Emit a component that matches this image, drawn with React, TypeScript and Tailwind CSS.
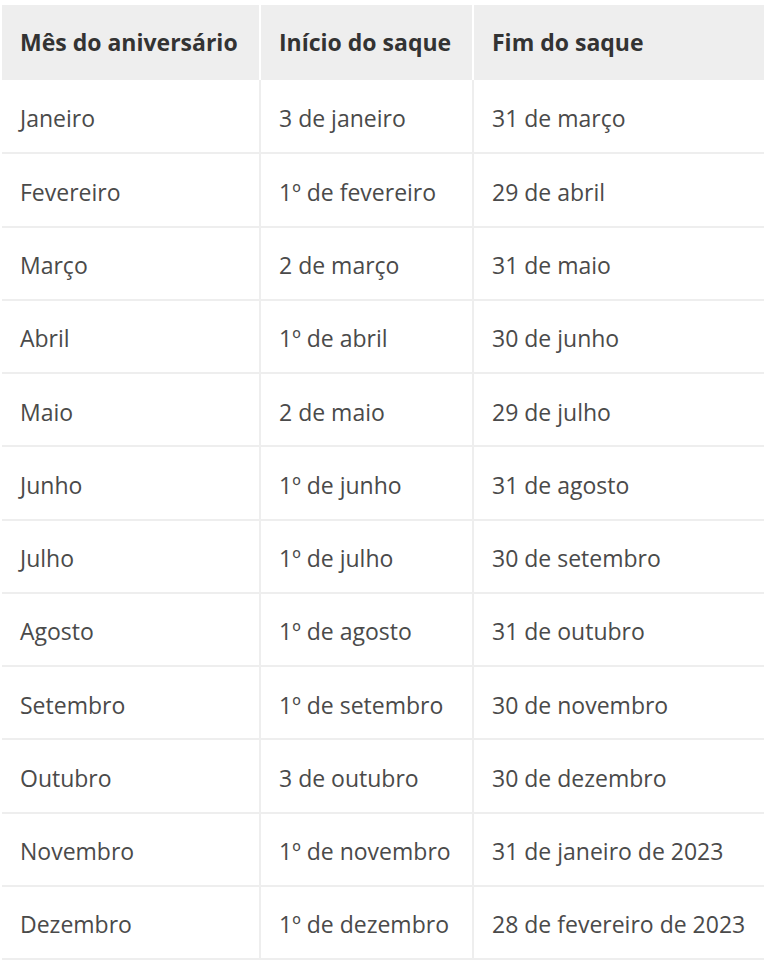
import React from 'react';

const rows: [string, string, string][] = [
  ['Janeiro', '3 de janeiro', '31 de março'],
  ['Fevereiro', '1º de fevereiro', '29 de abril'],
  ['Março', '2 de março', '31 de maio'],
  ['Abril', '1º de abril', '30 de junho'],
  ['Maio', '2 de maio', '29 de julho'],
  ['Junho', '1º de junho', '31 de agosto'],
  ['Julho', '1º de julho', '30 de setembro'],
  ['Agosto', '1º de agosto', '31 de outubro'],
  ['Setembro', '1º de setembro', '30 de novembro'],
  ['Outubro', '3 de outubro', '30 de dezembro'],
  ['Novembro', '1º de novembro', '31 de janeiro de 2023'],
  ['Dezembro', '1º de dezembro', '28 de fevereiro de 2023'],
];

export default function App() {
  return (
    <div className="min-h-screen bg-white pt-[5px] pl-[2px] font-['Open_Sans',sans-serif]">
      <table className="border-collapse table-fixed w-[762px] text-[23px] leading-none">
        <colgroup>
          <col className="w-[258px]" />
          <col className="w-[213px]" />
          <col className="w-[291px]" />
        </colgroup>
        <thead>
          <tr className="h-[75px] bg-[#eeeeee] text-[#333333]">
            <th className="border-r-2 border-white pl-[18px] text-left font-bold">Mês do aniversário</th>
            <th className="border-r-2 border-white pl-[18px] text-left font-bold">Início do saque</th>
            <th className="pl-[18px] text-left font-bold">Fim do saque</th>
          </tr>
        </thead>
        <tbody className="text-[#4a4a4a] font-normal">
          {rows.map(([m, ini, fim]) => (
            <tr key={m} className="h-[73.25px] border-b-2 border-[#eeeeee]">
              <td className="border-r-2 border-[#eeeeee] pl-[18px] pt-[5px]">{m}</td>
              <td className="border-r-2 border-[#eeeeee] pl-[18px] pt-[5px]">{ini}</td>
              <td className="pl-[18px] pt-[5px]">{fim}</td>
            </tr>
          ))}
        </tbody>
      </table>
    </div>
  );
}
